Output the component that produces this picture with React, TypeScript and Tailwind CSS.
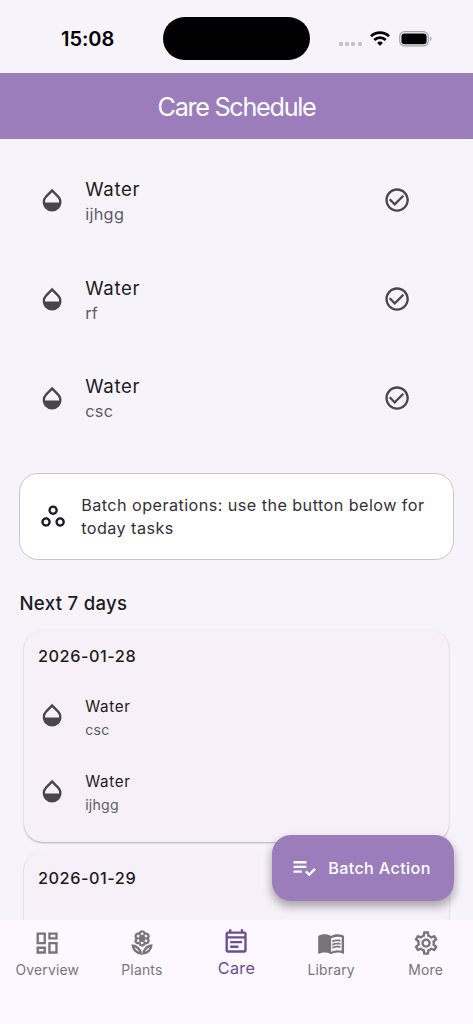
import React from 'react';
import {
    MdCheckCircleOutline,
    MdMenuBook,
    MdOpacity,
    MdOutlineDashboard,
    MdOutlineEventNote,
    MdOutlineLocalFlorist,
    MdOutlineSettings,
    MdOutlineWorkspaces,
    MdPlaylistAddCheck,
} from 'react-icons/md';

const todayTasks = ['ijhgg', 'rf', 'csc'];

const upcoming = [
    { date: '2026-01-28', plants: ['csc', 'ijhgg'] },
    { date: '2026-01-29', plants: [] },
];

const tabs = [
    { label: 'Overview', icon: MdOutlineDashboard },
    { label: 'Plants', icon: MdOutlineLocalFlorist },
    { label: 'Care', icon: MdOutlineEventNote },
    { label: 'Library', icon: MdMenuBook },
    { label: 'More', icon: MdOutlineSettings },
];

const StatusBar: React.FC = () => (
    <div className="relative h-[73px] shrink-0 flex items-start justify-between pl-[61px] pr-[42px]">
        <span className="mt-[24px] text-[20px] leading-[30px] font-semibold text-black tracking-[-0.05px]">15:08</span>
        <div className="absolute left-[163px] top-[16.5px] w-[147px] h-[43px] rounded-full bg-black" />
        <div className="mt-[30px] flex items-center h-4">
            <div className="flex gap-[2.3px] mt-[11px] mr-[8.5px]">
                {[0, 1, 2, 3].map(i => (
                    <span key={i} className="w-[4px] h-[4px] rounded-[1.3px] bg-[#c4c1c8]" />
                ))}
            </div>
            <svg className="w-[20px] h-[15px] mr-[9px]" viewBox="0 0 20 15">
                <g fill="none" stroke="#000" strokeWidth="2.8">
                    <path d="M1 5.2a13 13 0 0 1 18 0" />
                    <path d="M4.3 9a8.2 8.2 0 0 1 11.4 0" />
                </g>
                <path d="M10 14.8 7.1 11.9a4.2 4.2 0 0 1 5.8 0z" />
            </svg>
            <svg className="w-[33px] h-[16px] mt-px -mr-[1px]" viewBox="0 0 33 16">
                <rect x="0.7" y="0.7" width="28.6" height="14.2" rx="4.8" fill="none" stroke="#a3a0a8" strokeWidth="1.2" />
                <rect x="2.4" y="2.4" width="25.2" height="10.8" rx="3.2" />
                <path d="M31 5.3v5c1.9-.8 1.9-4.2 0-5z" fill="#a3a0a8" />
            </svg>
        </div>
    </div>
);

const App: React.FC = () => {
    return (
        <div className="relative w-[473px] h-[1024px] overflow-hidden flex flex-col bg-[#f6f3fb] text-[#1d1b20] font-['Inter',sans-serif]">
            <StatusBar />
            <header className="h-[66px] shrink-0 bg-[#9b7dbc] flex items-center justify-center">
                <h1 className="mt-[4px] text-[25.2px] leading-none text-white tracking-[-1.28px]">Care Schedule</h1>
            </header>

            <main className="flex-1 min-h-0 overflow-hidden pt-[12px] px-[19px]">
                {/* Today */}
                {todayTasks.map(plant => (
                    <div key={plant} className="h-[98.8px] flex items-center pl-[19px] pr-[42.5px]">
                        <MdOpacity className="size-[28.2px] text-[#49454f]" />
                        <div className="ml-[19px] mt-[1.4px] flex-1">
                            <p className="text-[18.6px] leading-[27px] tracking-[0.7px]">Water</p>
                            <p className="text-[16.3px] leading-[23.5px] tracking-[0.3px] text-[#5f5b66]">{plant}</p>
                        </div>
                        <MdCheckCircleOutline className="size-[28.2px] text-[#49454f]" />
                    </div>
                ))}

                <div className="mt-[25.5px] h-[87px] flex items-center rounded-[19px] border border-[#cac4d0] bg-white pl-[19px]">
                    <MdOutlineWorkspaces className="size-[28.2px] shrink-0" />
                    <p className="mt-[2px] ml-[14px] text-[16.2px] leading-[23.5px] tracking-[0.44px] text-[#323036]">
                        Batch operations: use the button below for<br />today tasks
                    </p>
                </div>

                <h2 className="mt-[29.5px] pl-[0.5px] text-[18.6px] leading-[28px] font-medium tracking-[0.3px]">Next 7 days</h2>

                {/* Upcoming days */}
                <div className="mt-[12.5px] mx-[5px] flex flex-col gap-[9.5px]">
                    {upcoming.map(day => (
                        <section key={day.date} className="h-[212px] shrink-0 rounded-[19px] bg-[#f7f0f9] px-[14px] pt-[14.5px] shadow-[0_1px_2px_rgba(0,0,0,0.28)]">
                            <h3 className="text-[16.3px] leading-[24px] font-medium tracking-[0.52px]">{day.date}</h3>
                            <div className="mt-[9.5px]">
                                {day.plants.map(plant => (
                                    <div key={plant} className="h-[75.3px] flex items-center">
                                        <MdOpacity className="size-[28.2px] text-[#49454f]" />
                                        <div className="ml-[19px] mt-[3px]">
                                            <p className="text-[15.2px] leading-[25px] tracking-[0.65px]">Water</p>
                                            <p className="text-[14.1px] leading-[22px] tracking-[0.25px] text-[#5f5b66]">{plant}</p>
                                        </div>
                                    </div>
                                ))}
                            </div>
                        </section>
                    ))}
                </div>
            </main>

            <button className="absolute left-[271.5px] top-[835px] w-[182px] h-[66px] rounded-[19px] bg-[#9b7dbc] text-white flex items-center pl-[18.2px] shadow-[0_5px_9px_1px_rgba(0,0,0,0.3)]">
                <MdPlaylistAddCheck className="size-[28.2px]" />
                <span className="ml-[10.3px] text-[16.2px] font-medium tracking-[0.35px] whitespace-nowrap">Batch Action</span>
            </button>

            <nav className="relative h-[104px] shrink-0 bg-[#fdf7ff] grid grid-cols-5">
                {tabs.map(({ label, icon: Icon }) => {
                    const active = label === 'Care';
                    return (
                        <div key={label} className={`flex flex-col items-center ${active ? 'pt-[7.5px] text-[#6b4f91]' : 'pt-[8.5px] text-[#79747a]'}`}>
                            <Icon className="size-[28.2px]" />
                            <span className={active ? 'mt-[0.5px] text-[16.2px] leading-[24px] tracking-[0.3px]' : 'mt-[2.5px] text-[13.9px] leading-[22px] tracking-[0.2px]'}>
                                {label}
                            </span>
                        </div>
                    );
                })}
            </nav>
        </div>
    );
};

export default App;
